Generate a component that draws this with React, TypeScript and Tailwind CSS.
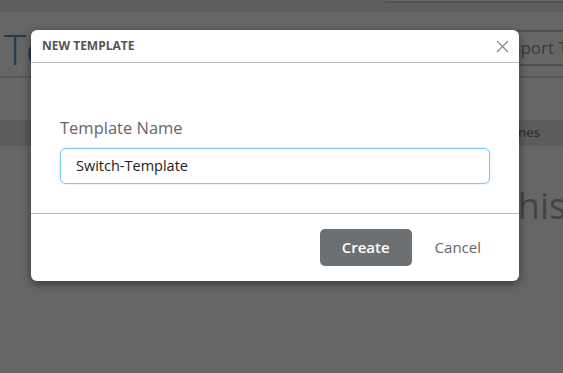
import React from "react";

const font = { fontFamily: '"Open Sans", "Liberation Sans", sans-serif' };

const Page = () => {
  return (
    <div className="flex flex-col w-full h-full bg-white">
      <div className="h-[12px] bg-[#ececec] border-b border-[#f4f4f4] flex justify-end">
        <div className="w-[180px] h-[3px] border-b-2 border-l-2 border-[#cfcfcf] rounded-bl-[3px] bg-white" />
      </div>
      <div className="flex items-start h-[66px] border-b-2 border-[#d9d9d9]">
        <h1 className="pl-[4px] pt-[16px] text-[42px] font-light text-[#3f94d6] leading-none">
          Templates
        </h1>
        <div className="ml-auto mr-[-92px] mt-[18px] shrink-0 h-[36px] pl-[12px] pr-[12px] border-2 border-[#c8c8c8] rounded-[4px] text-[17px] text-[#949494] flex items-center whitespace-nowrap">
          Import Templates
        </div>
      </div>
      <div className="h-[42px]" />
      <div className="h-[26px] bg-[#e6e6e6] flex items-center justify-end pr-[23px]">
        <span className="text-[13px] font-semibold text-[#7a7a7a]">Machines</span>
      </div>
      <div className="flex-1 pt-[42px] pl-[505px]">
        <span className="text-[36px] text-[#ababab] leading-none whitespace-nowrap">
          this category
        </span>
      </div>
    </div>
  );
};

const CloseIcon = () => (
  <svg width="13" height="13" viewBox="0 0 13 13" fill="none">
    <path d="M1 1L12 12M12 1L1 12" stroke="#8a8a8a" strokeWidth="1.2" />
  </svg>
);

const App = () => {
  return (
    <div className="relative w-[563px] h-[373px] overflow-hidden" style={font}>
      <Page />
      <div className="absolute inset-0 bg-black/60" />
      <div className="absolute left-[31px] top-[30px] w-[488px] bg-white rounded-[6px] shadow-[0_3px_10px_rgba(0,0,0,0.45)]">
        <div className="flex items-center justify-between h-[33px] pl-[11px] pr-[9px] border-b border-[#bdbdbd]">
          <span className="text-[12px] font-bold text-[#555555] uppercase">
            New Template
          </span>
          <button className="flex items-center justify-center w-[15px] h-[15px]">
            <CloseIcon />
          </button>
        </div>
        <div className="pt-[54px] pb-[29px] px-[29px] border-b border-[#bdbdbd]">
          <label className="block text-[16.5px] leading-[22px] text-[#666666] mb-[9px]">
            Template Name
          </label>
          <div className="h-[36px] border border-[#7cc8f2] rounded-[6px] flex items-center px-[15px] shadow-[0_0_2px_rgba(124,200,242,0.6)]">
            <span className="text-[14.5px] text-[#222222]">Switch-Template</span>
          </div>
        </div>
        <div className="flex items-center justify-end gap-[11px] pt-[15px] pb-[15px] pr-[26px]">
          <button className="w-[92px] h-[37px] rounded-[5px] bg-[#6d7073] text-white text-[15px] font-semibold">
            Create
          </button>
          <button className="h-[37px] px-[12px] text-[15px] text-[#666666]">Cancel</button>
        </div>
      </div>
    </div>
  );
};

export default App;
